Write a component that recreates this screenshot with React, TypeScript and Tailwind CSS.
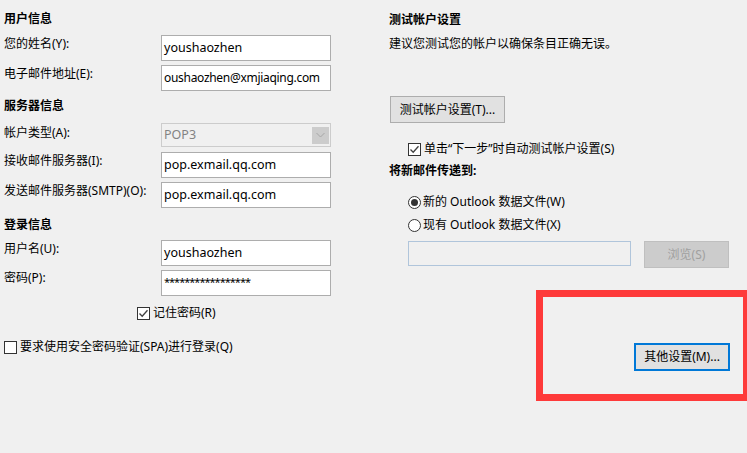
const font = { fontFamily: '"Noto Sans", "Noto Sans CJK SC", sans-serif' };

function Check({ checked }: { checked: boolean }) {
  return (
    <span className="w-[13px] h-[13px] border border-[#333333] bg-white flex items-center justify-center shrink-0">
      {checked && (
        <svg width="11" height="11" viewBox="0 0 11 11">
          <polyline points="1.5,5.5 4.2,8.3 9.5,2.2" fill="none" stroke="#404040" strokeWidth="1.3" />
        </svg>
      )}
    </span>
  );
}

function Radio({ on }: { on: boolean }) {
  return (
    <span className="w-[13px] h-[13px] rounded-full border border-[#333333] bg-white flex items-center justify-center shrink-0">
      {on && <span className="w-[7px] h-[7px] rounded-full bg-[#333333]" />}
    </span>
  );
}

function Field({
  label,
  value,
  mt,
  lpt = "pt-0",
  vcls = "text-[12.5px]",
}: {
  label: string;
  value: string;
  mt: string;
  lpt?: string;
  vcls?: string;
}) {
  return (
    <div className={`flex items-start ${mt}`}>
      <div className={`w-[157px] leading-[18px] ${lpt}`}>{label}</div>
      <div
        className={`w-[170px] h-[26px] border border-[#adadad] bg-white flex items-center pl-[2px] overflow-hidden whitespace-nowrap ${vcls}`}
      >
        {value}
      </div>
    </div>
  );
}

export default function App() {
  return (
    <div
      className="relative w-[747px] h-[453px] bg-[#f0f0f0] overflow-hidden flex text-[12px] text-black"
      style={font}
    >
      {/* left column */}
      <div className="w-[331px] pl-[4px] pt-[10px] flex flex-col">
        <div className="font-bold leading-[18px]">用户信息</div>
        <Field label="您的姓名(Y):" value="youshaozhen" mt="mt-[7px]" />
        <Field
          label="电子邮件地址(E):"
          value="oushaozhen@xmjiaqing.com"
          mt="mt-[4px]"
          vcls="text-[12px] tracking-[-0.3px]"
        />
        <div className="font-bold leading-[18px] mt-[6px]">服务器信息</div>
        <div className="flex items-start mt-[8px]">
          <div className="w-[157px] leading-[18px] pt-[1px]">帐户类型(A):</div>
          <div className="w-[170px] h-[24px] border border-[#cccccc] bg-[#f0f0f0] flex items-center justify-between pl-[2px] pr-[1px]">
            <span className="text-[#838383] text-[12.5px]">POP3</span>
            <span className="w-[17px] h-[17px] bg-[#cccccc] flex items-center justify-center">
              <svg width="9" height="6" viewBox="0 0 9 6">
                <polyline points="0.5,1 4.5,5 8.5,1" fill="none" stroke="#a6a6a6" strokeWidth="1" />
              </svg>
            </span>
          </div>
        </div>
        <Field label="接收邮件服务器(I):" value="pop.exmail.qq.com" mt="mt-[5px]" />
        <Field label="发送邮件服务器(SMTP)(O):" value="pop.exmail.qq.com" mt="mt-[4px]" />
        <div className="font-bold leading-[18px] mt-[8px]">登录信息</div>
        <Field label="用户名(U):" value="youshaozhen" mt="mt-[6px]" />
        <Field
          label="密码(P):"
          value="*****************"
          mt="mt-[4px]"
          lpt="-mt-[1px]"
          vcls="text-[11px] tracking-[-1px] items-start pt-[3px]"
        />
        <div className="flex items-center gap-[3px] mt-[10px] pl-[133px] h-[14px]">
          <Check checked />
          <span>记住密码(R)</span>
        </div>
        <div className="flex items-center gap-[3px] mt-[20px] h-[14px]">
          <Check checked={false} />
          <span>要求使用安全密码验证(SPA)进行登录(Q)</span>
        </div>
      </div>

      {/* right column */}
      <div className="ml-[58px] flex-1 pt-[11px] flex flex-col">
        <div className="font-bold leading-[18px]">测试帐户设置</div>
        <div className="leading-[18px] mt-[6px]">建议您测试您的帐户以确保条目正确无误。</div>
        <button className="ml-[1px] mt-[43px] w-[115px] h-[27px] border border-[#adadad] bg-[#e1e1e1] flex items-center justify-center">
          测试帐户设置(T)...
        </button>
        <div className="flex items-center gap-[3px] ml-[19px] mt-[17px] h-[18px]">
          <Check checked />
          <span>单击“下一步”时自动测试帐户设置(S)</span>
        </div>
        <div className="font-bold leading-[18px] mt-[4px]">将新邮件传递到:</div>
        <div className="flex items-center gap-[2px] ml-[19px] mt-[13px] h-[18px]">
          <Radio on />
          <span>新的 Outlook 数据文件(W)</span>
        </div>
        <div className="flex items-center gap-[2px] ml-[19px] mt-[5px] h-[18px]">
          <Radio on={false} />
          <span>现有 Outlook 数据文件(X)</span>
        </div>
        <div className="flex items-start gap-[13px] ml-[19px] mt-[7px]">
          <div className="w-[223px] h-[25px] border border-[#b0c5db] bg-[#f0f0f0]" />
          <button className="w-[85px] h-[27px] border border-[#bfbfbf] bg-[#cccccc] text-[#a0a0a0] flex items-center justify-center">
            浏览(S)
          </button>
        </div>
        <div className="flex justify-end pr-[17px] mt-[75px]">
          <button className="w-[96px] h-[28px] border-2 border-[#0078d7] bg-[#e1e1e1] flex items-center justify-center">
            其他设置(M)...
          </button>
        </div>
      </div>

      {/* annotation box */}
      <div className="absolute left-[536px] top-[290px] w-[214px] h-[111px] border-[7px] border-[#fe3a3a] pointer-events-none" />
    </div>
  );
}
